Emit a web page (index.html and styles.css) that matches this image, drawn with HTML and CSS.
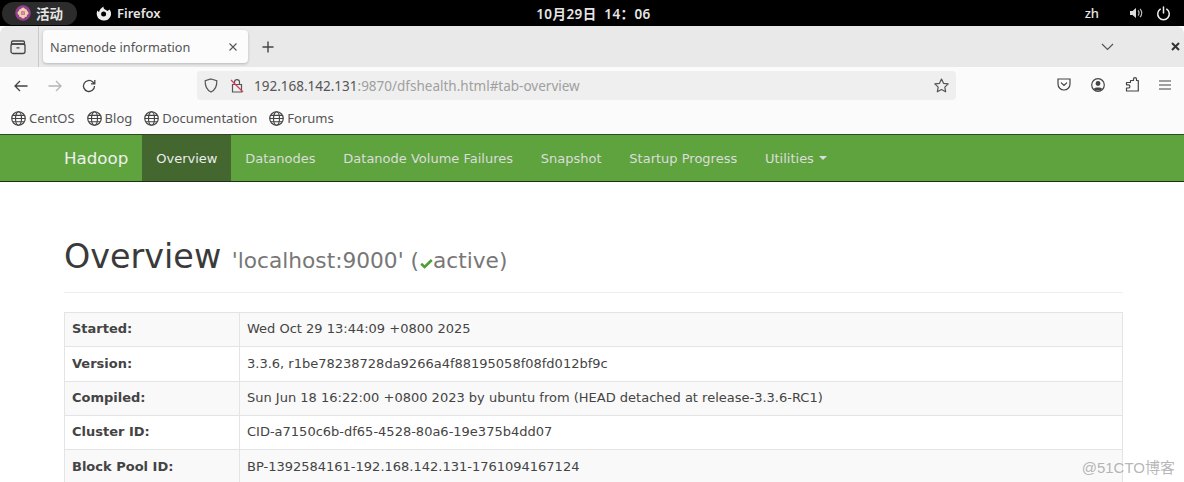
FILE: index.html
```html
<!DOCTYPE html>
<html lang="en">
<head>
<meta charset="utf-8">
<title>Namenode information</title>
<link rel="stylesheet" href="styles.css">
</head>
<body>
<div class="topbar">
  <div class="top-left">
    <div class="activities">
      <svg class="logo" width="16" height="16" viewBox="0 0 16 16"><circle cx="8" cy="8" r="7.800" fill="#93408a"/><g fill="#f1d3b0"><circle cx="8" cy="4.500" r="2"/><circle cx="8" cy="11.500" r="2"/><circle cx="4.500" cy="8" r="2"/><circle cx="11.500" cy="8" r="2"/><circle cx="5.500" cy="5.500" r="1.500"/><circle cx="10.500" cy="5.500" r="1.500"/><circle cx="5.500" cy="10.500" r="1.500"/><circle cx="10.500" cy="10.500" r="1.500"/></g><circle cx="8" cy="8" r="1.500" fill="#e58aa8"/></svg>
      <span>活动</span>
    </div>
    <div class="app">
      <svg width="15" height="15" viewBox="0 0 15 15"><path d="M7.500 14.500A6.800 6.800 0 0 1 1.500 4.500L3 6.200C3.500 4 5 2 7.500.500 7.300 2 7.800 3 9 3.500c1 .4 1.800 1 2.500 1.500l2-1.500a6.800 6.800 0 0 1-6 11z" fill="#eee"/><circle cx="7.600" cy="8" r="2.500" fill="#000"/></svg>
      <span class="app-name">Firefox</span>
    </div>
  </div>
  <div class="clock">10月29日&nbsp; 14：06</div>
  <div class="top-right">
    <span class="lang">zh</span>
    <svg width="15" height="14" viewBox="0 0 15 14"><path d="M1 5h2.500L7 2v10L3.500 9H1z" fill="#ddd"/><path d="M9 4.500a3.500 3.500 0 0 1 0 5M11 2.800a6 6 0 0 1 0 8.400" stroke="#bbb" stroke-width="1.200" fill="none"/></svg>
    <svg width="15" height="15" viewBox="0 0 15 15"><path d="M4.300 3.200a5.800 5.800 0 1 0 6.400 0M7.500 1v6" stroke="#eee" stroke-width="1.500" fill="none" stroke-linecap="round"/></svg>
  </div>
</div>

<div class="tabstrip">
  <div class="side-btn">
    <svg width="16" height="16" viewBox="0 0 16 16" fill="none" stroke="#444" stroke-width="1.300"><rect x="1" y="5" width="14" height="9.500" rx="2"/><path d="M3 2h10a1.500 1.500 0 0 1 1.500 1.500V5h-13V3.500A1.500 1.500 0 0 1 3 2zM6.500 8.800h3"/></svg>
  </div>
  <div class="tab">
    <span class="tab-title">Namenode information</span>
    <svg width="10" height="10" viewBox="0 0 10 10" stroke="#555" stroke-width="1.100"><path d="M1.500 1.500l7 7M8.500 1.500l-7 7"/></svg>
  </div>
  <svg class="plus" width="12" height="12" viewBox="0 0 12 12" stroke="#444" stroke-width="1.400"><path d="M6 .5v11M.5 6h11"/></svg>
  <div class="strip-right">
    <svg width="13" height="8" viewBox="0 0 13 8" fill="none" stroke="#555" stroke-width="1.200"><path d="M1 1l5.500 5.500L12 1"/></svg>
    <svg class="win-close" width="9" height="9" viewBox="0 0 9 9" stroke="#333" stroke-width="2"><path d="M1 1l7 7M8 1l-7 7"/></svg>
  </div>
</div>

<div class="toolbar">
  <div class="nav-btns">
    <svg width="14" height="12" viewBox="0 0 14 12" fill="none" stroke="#444" stroke-width="1.300"><path d="M13.500 6H1M6 1L1 6l5 5"/></svg>
    <svg width="14" height="12" viewBox="0 0 14 12" fill="none" stroke="#b5b5b5" stroke-width="1.300"><path d="M.5 6H13M8 1l5 5-5 5"/></svg>
    <svg width="14" height="14" viewBox="0 0 14 14" fill="none" stroke="#444" stroke-width="1.300"><path d="M12.500 7a5.500 5.500 0 1 1-1.700-4L12.500 4.600M12.800 1v3.800H9"/></svg>
  </div>
  <div class="urlbar">
    <svg class="shield" width="14" height="15" viewBox="0 0 14 15" fill="none" stroke="#555" stroke-width="1.200"><path d="M7 1l5.800 1.800c.2 5.200-1.600 9.300-5.800 11.200C2.800 12.100 1 8 1.200 2.800z"/></svg>
    <svg class="lock" width="14" height="15" viewBox="0 0 14 15" fill="none"><path d="M4.500 6.500V4.200a2.500 2.500 0 0 1 5 0v2.300M2.500 6.500h9V14h-9z" stroke="#555" stroke-width="1.200"/><path d="M1 2l12 12" stroke="#e0385a" stroke-width="1.200"/></svg>
    <span class="url"><span class="host">192.168.142.131</span>:9870/dfshealth.html#tab-overview</span>
    <svg class="star" width="15" height="15" viewBox="0 0 15 15" fill="none" stroke="#555" stroke-width="1.200"><path d="M7.500 1l2 4.300 4.700.6-3.400 3.200.9 4.700-4.200-2.300-4.200 2.300.9-4.700L.8 5.900l4.700-.6z" stroke-linejoin="round"/></svg>
  </div>
  <div class="tool-right">
    <svg width="14" height="13" viewBox="0 0 14 13" fill="none" stroke="#444" stroke-width="1.200"><path d="M1 1h12v5a6 6 0 0 1-12 0z"/><path d="M4.300 4.800L7 7.500l2.700-2.700" stroke-linecap="round"/></svg>
    <svg width="14" height="14" viewBox="0 0 14 14"><circle cx="7" cy="7" r="6.300" fill="none" stroke="#444" stroke-width="1.200"/><circle cx="7" cy="5.500" r="2.400" fill="#444"/><path d="M2.800 11c1-1.900 7.400-1.900 8.400 0-2 2-6.400 2-8.400 0z" fill="#444"/></svg>
    <svg width="14" height="15" viewBox="0 0 14 15" fill="none" stroke="#444" stroke-width="1.200"><path d="M5.500 3.500H8.500V2.200a1.500 1.500 0 0 1 3 0v1.300h1.800V14H1.500v-3h1.800a1.600 1.600 0 0 0 0-3.200H1.500V5.500h4z" stroke-linejoin="round"/></svg>
    <svg width="12" height="10" viewBox="0 0 12 10" stroke="#444" stroke-width="1.200"><path d="M0 1h12M0 5h12M0 9h12"/></svg>
  </div>
</div>

<div class="bookmarks">
  <a class="bm"><svg class="globe" viewBox="0 0 14 14"><use href="#globe"/></svg>CentOS</a>
  <a class="bm"><svg class="globe" viewBox="0 0 14 14"><use href="#globe"/></svg>Blog</a>
  <a class="bm"><svg class="globe" viewBox="0 0 14 14"><use href="#globe"/></svg>Documentation</a>
  <a class="bm"><svg class="globe" viewBox="0 0 14 14"><use href="#globe"/></svg>Forums</a>
  <svg class="defs" width="0" height="0"><defs><g id="globe" fill="none" stroke="#444" stroke-width="1.100"><circle cx="7" cy="7" r="6.300"/><ellipse cx="7" cy="7" rx="2.800" ry="6.300"/><path d="M.7 7h12.600M1.600 4h10.800M1.600 10h10.800"/></g></defs></svg>
</div>

<nav class="navbar">
  <a class="brand">Hadoop</a>
  <a class="nav-item active">Overview</a>
  <a class="nav-item">Datanodes</a>
  <a class="nav-item">Datanode Volume Failures</a>
  <a class="nav-item">Snapshot</a>
  <a class="nav-item">Startup Progress</a>
  <a class="nav-item">Utilities <i class="caret"></i></a>
</nav>

<main class="content">
  <div class="page-header">
    <h1>Overview <small>'localhost:9000' (<svg class="check" width="13" height="11" viewBox="0 0 13 11"><path d="M1.200 5.800L4.600 9 11.800 2" fill="none" stroke="#4f9e37" stroke-width="2.600"/></svg>active)</small></h1>
  </div>
  <table class="info">
    <tr><th>Started:</th><td>Wed Oct 29 13:44:09 +0800 2025</td></tr>
    <tr><th>Version:</th><td>3.3.6, r1be78238728da9266a4f88195058f08fd012bf9c</td></tr>
    <tr><th>Compiled:</th><td>Sun Jun 18 16:22:00 +0800 2023 by ubuntu from (HEAD detached at release-3.3.6-RC1)</td></tr>
    <tr><th>Cluster ID:</th><td>CID-a7150c6b-df65-4528-80a6-19e375b4dd07</td></tr>
    <tr><th>Block Pool ID:</th><td>BP-1392584161-192.168.142.131-1761094167124</td></tr>
  </table>
</main>
<div class="watermark">@51CTO博客</div>
</body>
</html>
```

FILE: styles.css
```css
* { box-sizing: border-box; }
html, body { margin: 0; padding: 0; height: 482px; overflow: hidden; background: #fff; }
body { position: relative; font-family: "DejaVu Sans", sans-serif; color: #333; font-size: 13px; }
svg { display: block; flex: none; }

.topbar { height: 26px; background: #000; color: #e6e6e6; display: grid; grid-template-columns: 1fr auto 1fr; align-items: center; font-family: "Noto Sans", "Noto Sans CJK SC", sans-serif; font-size: 13.500px; font-weight: 600; }
.top-left { display: flex; align-items: center; padding-left: 2px; }
.activities { width: 75px; height: 23px; border-radius: 12px; background: #2c2c2c; display: flex; align-items: center; gap: 5px; padding-left: 13px; }
.app { display: flex; align-items: center; gap: 6px; margin-left: 19px; }
.app-name { font-size: 13px; }
.clock { letter-spacing: .4px; transform: translateX(1.500px); }
.top-right { display: flex; align-items: center; justify-content: flex-end; padding-right: 13px; }
.lang { margin-right: 30px; font-size: 13px; font-weight: 500; }
.top-right svg:last-child { margin-left: 12px; }

.tabstrip { height: 41px; background: #e9e9e9; border-radius: 8px 8px 0 0; display: flex; align-items: center; font-family: "Noto Sans", sans-serif; }
.side-btn { width: 39px; height: 41px; display: flex; align-items: center; justify-content: center; padding-right: 3px; border-right: 1px solid #c9c9c9; }
.tab { width: 205px; height: 33px; margin-left: 4px; background: #fcfcfc; border-radius: 4px; box-shadow: 0 1px 3px rgba(0,0,0,.22); display: flex; align-items: center; justify-content: space-between; padding: 0 10px 0 7px; font-size: 12.700px; color: #555; }
.plus { margin-left: 14px; }
.strip-right { margin-left: auto; display: flex; align-items: center; gap: 57px; padding-right: 4px; }

.toolbar { height: 33px; background: #fbfbfb; display: flex; align-items: flex-end; font-family: "Noto Sans", sans-serif; }
.nav-btns { width: 197px; height: 29px; display: flex; align-items: center; gap: 20px; padding-left: 14px; }
.urlbar { width: 759px; height: 29px; background: #efefef; border-radius: 4px; display: flex; align-items: center; padding: 0 7px; font-size: 13.500px; color: #a0a0a0; }
.lock { margin-left: 12px; }
.url { margin-left: 10px; flex: 1; }
.host { color: #555; }
.tool-right { height: 29px; display: flex; align-items: center; gap: 20px; margin-left: auto; padding-right: 13px; transform: translateY(-1px); }

.bookmarks { height: 34px; padding-top: 2px; background: #fbfbfb; display: flex; align-items: center; gap: 12px; padding-left: 11px; font-family: "Noto Sans", sans-serif; font-size: 13px; color: #555; }
.bm { display: flex; align-items: center; gap: 3px; }
.globe { width: 15px; height: 15px; }
.defs { position: absolute; }

.navbar { height: 48px; background: #5fa33e; border-top: 1px solid #2c4a1f; border-bottom: 1px solid #1c2e13; display: flex; align-items: stretch; padding-left: 64px; }
.brand { font-size: 16.700px; color: #f0f0f0; display: flex; align-items: center; padding-right: 14px; }
.nav-item { display: flex; align-items: center; padding: 0 13.900px; color: #dcdcdc; font-size: 13px; white-space: nowrap; }
.nav-item.active { background: #43672f; color: #ececec; }
.caret { display: inline-block; width: 0; height: 0; margin-left: 5px; border-top: 4px solid #dcdcdc; border-left: 4px solid transparent; border-right: 4px solid transparent; vertical-align: middle; }

.content { padding: 0 61px 0 64px; }
.page-header { padding-top: 57px; height: 111px; border-bottom: 1px solid #eee; }
h1 { margin: 0; font-size: 33.400px; font-weight: 400; line-height: 36px; color: #3a3a3a; white-space: nowrap; }
small { font-size: 21.700px; color: #777; }
.check { display: inline-block; margin: 0 0 -1px 1px; }

.info { width: 100%; margin-top: 19px; border-collapse: collapse; font-size: 13px; line-height: 18.500px; color: #444; }
.info th, .info td { border: 1px solid #e4e4e4; padding: 7.400px 7px; text-align: left; }
.info th { width: 175px; font-weight: 700; }
.info tr:nth-child(odd) { background: #f9f9f9; }

.watermark { position: absolute; right: 9px; top: 456px; font-family: "Liberation Sans", "Noto Sans CJK SC", sans-serif; font-size: 15px; color: rgba(120,120,120,.55); }
```
